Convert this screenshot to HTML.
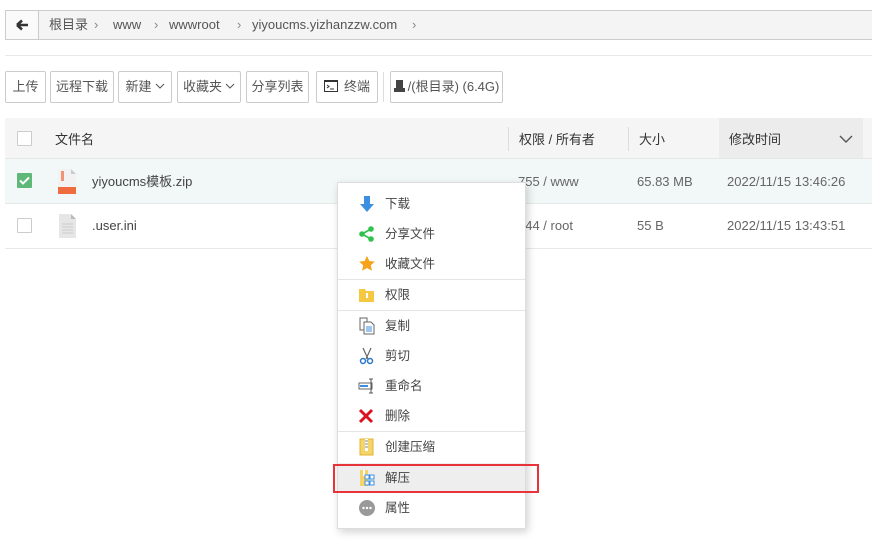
<!DOCTYPE html>
<html><head><meta charset="utf-8"><style>
*{margin:0;padding:0;box-sizing:border-box}
body{width:872px;height:545px;background:#fff;font-family:"Liberation Sans","Noto Sans CJK SC",sans-serif;font-size:13px;line-height:18px;color:#555;position:relative;overflow:hidden}
.abs{position:absolute}
.bc{left:5px;top:10px;width:875px;height:30px;border:1px solid #ccc;background:#f4f4f4}
.bc .back{position:absolute;left:0;top:0;width:33px;height:28px;border-right:1px solid #ccc;background:#fafafa}
.bc span{position:absolute;top:0;line-height:28px;color:#555;font-size:13px}
.btn{position:absolute;top:71px;height:32px;border:1px solid #ccc;border-radius:2px;background:#fff;font-size:13px;color:#555;line-height:30px;text-align:center;white-space:nowrap}
.hdr{left:5px;top:118px;width:867px;height:41px;background:#f5f5f5;border-bottom:1px solid #e6e6e6}
.cb{position:absolute;width:15px;height:15px;border:1px solid #ccc;background:#fff;border-radius:1px}
.row{left:5px;width:867px;height:45px;border-bottom:1px solid #e8e8e8}
.t{position:absolute;white-space:nowrap;line-height:18px}
.menu{left:337px;top:182px;width:189px;height:347px;background:#fff;border:1px solid #ddd;box-shadow:2px 3px 8px rgba(0,0,0,.18)}
.mi{position:absolute;left:0;width:187px;height:30px}
.mi .t{left:47px;top:6px;font-size:12.5px;color:#444}
.mi svg{position:absolute;left:20px;top:6px}
.sep{position:absolute;left:0;width:187px;height:1px;background:#e5e5e5}
.chev{vertical-align:2px;margin-left:3px}
</style></head><body>
<div class="abs bc"><div class="back"><svg width="33" height="28"><path d="M11 14h11M11 14l5-4.5M11 14l5 4.5" stroke="#333" stroke-width="2.6" fill="none"/></svg></div>
<span style="left:43px">根目录</span><span style="left:88px;color:#888">›</span>
<span style="left:107px">www</span><span style="left:148px;color:#888">›</span>
<span style="left:163px">wwwroot</span><span style="left:231px;color:#888">›</span>
<span style="left:246px">yiyoucms.yizhanzzw.com</span><span style="left:406px;color:#888">›</span></div>
<div class="abs" style="left:5px;top:55px;width:867px;height:1px;background:#e8e8e8"></div>
<div class="btn" style="left:5px;width:41px">上传</div>
<div class="btn" style="left:50px;width:64px">远程下载</div>
<div class="btn" style="left:118px;width:54px">新建<svg class="chev" width="10" height="6"><path d="M1 1l4 4 4-4" stroke="#555" fill="none"/></svg></div>
<div class="btn" style="left:177px;width:64px">收藏夹<svg class="chev" width="10" height="6"><path d="M1 1l4 4 4-4" stroke="#555" fill="none"/></svg></div>
<div class="btn" style="left:246px;width:63px">分享列表</div>
<div class="btn" style="left:316px;width:62px"><svg width="14" height="12" style="vertical-align:-1px;margin-right:6px"><rect x=".5" y=".5" width="13" height="11" fill="#fff" stroke="#333"/><rect x="0" y="0" width="14" height="2" fill="#333"/><path d="M3 5l2 1.5L3 8M6 9h4" stroke="#333" fill="none"/></svg>终端</div>
<div class="abs" style="left:383px;top:72px;width:1px;height:30px;background:#ddd"></div>
<div class="btn" style="left:390px;width:113px"><svg width="11" height="12" style="vertical-align:-1px;margin-right:3px"><rect x="2" y="0" width="7" height="8" fill="#444"/><rect x="0" y="8" width="11" height="4" fill="#444"/></svg>/(根目录) (6.4G)</div>
<div class="abs hdr">
<div class="cb" style="left:12px;top:13px"></div>
<div class="t" style="left:50px;top:13px;color:#333">文件名</div>
<div class="abs" style="left:503px;top:9px;width:1px;height:24px;background:#ddd"></div>
<div class="t" style="left:514px;top:13px;color:#333">权限 / 所有者</div>
<div class="abs" style="left:623px;top:9px;width:1px;height:24px;background:#ddd"></div>
<div class="t" style="left:634px;top:13px;color:#333">大小</div>
<div class="abs" style="left:714px;top:0;width:144px;height:40px;background:#ececec"></div>
<div class="t" style="left:724px;top:13px;color:#333">修改时间</div>
<svg class="abs" style="left:834px;top:17px" width="14" height="9"><path d="M1 1l6 6 6-6" stroke="#555" stroke-width="1.4" fill="none"/></svg>
</div>
<div class="abs row" style="top:159px;background:#f1f8f7">
<div class="abs" style="left:12px;top:14px;width:15px;height:15px;background:#5fb878;border-radius:1px"><svg width="15" height="15"><path d="M3 7.5l3 3 6-6" stroke="#fff" stroke-width="2" fill="none"/></svg></div>
<svg class="abs" style="left:53px;top:10px" width="18" height="25"><path d="M0 0h13l5 5v20H0z" fill="#f2f2f2"/><path d="M13 0v5h5" fill="#ccc"/><rect x="0" y="18" width="18" height="7" fill="#ef6c3e"/><rect x="3" y="2" width="3" height="10" fill="#ef6c3e" opacity=".7"/></svg>
<div class="t" style="left:87px;top:14px;color:#444">yiyoucms模板.zip</div>
<div class="t" style="left:513px;top:14px;color:#666">755 / www</div>
<div class="t" style="left:632px;top:14px;color:#666">65.83 MB</div>
<div class="t" style="left:722px;top:14px;color:#666">2022/11/15 13:46:26</div>
</div>
<div class="abs row" style="top:204px">
<div class="cb" style="left:12px;top:14px"></div>
<svg class="abs" style="left:54px;top:10px" width="17" height="24"><path d="M0 0h12l5 5v19H0z" fill="#e6e6e6"/><path d="M12 0v5h5" fill="#bbb"/><path d="M3 10h11M3 13h11M3 16h11M3 19h11" stroke="#ccc"/></svg>
<div class="t" style="left:87px;top:13px;color:#444">.user.ini</div>
<div class="t" style="left:513px;top:13px;color:#666">644 / root</div>
<div class="t" style="left:632px;top:13px;color:#666">55 B</div>
<div class="t" style="left:722px;top:13px;color:#666">2022/11/15 13:43:51</div>
</div>
<div class="abs menu">
<div class="mi" style="top:6px"><svg width="18" height="18"><path d="M6 1h6v8h4l-7 8-7-8h4z" fill="#3d8fe0"/></svg><div class="t">下载</div></div>
<div class="mi" style="top:36px"><svg width="18" height="18"><path d="M4 9L13 4M4 9l9 5" stroke="#2fc24c" stroke-width="1.6"/><circle cx="4" cy="9" r="2.8" fill="#2fc24c"/><circle cx="13" cy="4" r="2.8" fill="#2fc24c"/><circle cx="13" cy="14" r="2.8" fill="#2fc24c"/></svg><div class="t">分享文件</div></div>
<div class="mi" style="top:66px"><svg width="18" height="18"><path d="M9 1l2.4 5 5.4.6-4 3.7 1.1 5.4L9 13l-4.9 2.7 1.1-5.4-4-3.7 5.4-.6z" fill="#f7a21b"/></svg><div class="t">收藏文件</div></div>
<div class="sep" style="top:96px"></div>
<div class="mi" style="top:97px"><svg width="18" height="18"><path d="M1 3h6l1 2h8v11H1z" fill="#f5c842"/><rect x="8" y="7" width="2" height="5" fill="#fff"/></svg><div class="t">权限</div></div>
<div class="sep" style="top:127px"></div>
<div class="mi" style="top:128px"><svg width="18" height="18"><path d="M2 1h7v12H2z" fill="#fff" stroke="#666"/><path d="M6 5h7l3 3v9H6z" fill="#fff" stroke="#666"/><path d="M8 10h6M8 12h6M8 14h6" stroke="#3d8fe0"/></svg><div class="t">复制</div></div>
<div class="mi" style="top:158px"><svg width="18" height="18"><path d="M5 1l5 11M13 1L8 12" stroke="#666" stroke-width="1.2"/><circle cx="5" cy="14" r="2.5" fill="none" stroke="#2a78c8" stroke-width="1.5"/><circle cx="12" cy="14" r="2.5" fill="none" stroke="#2a78c8" stroke-width="1.5"/></svg><div class="t">剪切</div></div>
<div class="mi" style="top:188px"><svg width="18" height="18"><rect x="1" y="6" width="13" height="6" fill="#fff" stroke="#666"/><rect x="2" y="8" width="8" height="2" fill="#3d8fe0"/><path d="M13 2v14M11 2h4M11 16h4" stroke="#555"/></svg><div class="t">重命名</div></div>
<div class="mi" style="top:218px"><svg width="18" height="18"><path d="M2 3l12 12M14 3L2 15" stroke="#d9141e" stroke-width="3"/></svg><div class="t">删除</div></div>
<div class="sep" style="top:248px"></div>
<div class="mi" style="top:249px"><svg width="18" height="18"><rect x="2" y="1" width="13" height="16" fill="#f5d46b" stroke="#e3b52e"/><rect x="7" y="1" width="3" height="12" fill="#fff"/><path d="M7 3h3M7 6h3M7 9h3" stroke="#888"/></svg><div class="t">创建压缩</div></div>
<div class="mi" style="top:280px;background:#eee"><svg width="18" height="18"><rect x="2" y="1" width="8" height="16" fill="#f5d46b"/><rect x="5" y="1" width="2" height="6" fill="#fff"/><g fill="#fff" stroke="#3d8fe0"><rect x="7" y="6" width="4" height="4"/><rect x="12" y="6" width="4" height="4"/><rect x="7" y="12" width="4" height="4"/><rect x="12" y="12" width="4" height="4"/></g></svg><div class="t">解压</div></div>
<div class="mi" style="top:310px"><svg width="18" height="18"><circle cx="9" cy="9" r="8" fill="#999"/><circle cx="5.5" cy="9" r="1.2" fill="#fff"/><circle cx="9" cy="9" r="1.2" fill="#fff"/><circle cx="12.5" cy="9" r="1.2" fill="#fff"/></svg><div class="t">属性</div></div>
</div>
<div class="abs" style="left:333px;top:464px;width:206px;height:29px;border:2px solid #e8333a"></div>
</body></html>
